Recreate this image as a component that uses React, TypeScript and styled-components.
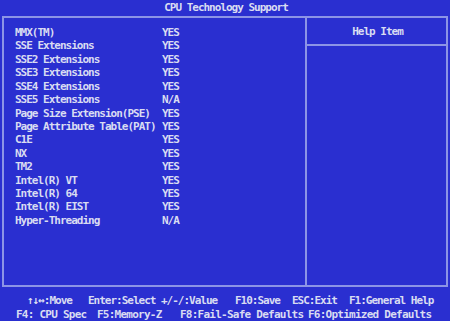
import React from "react";
import styled, { createGlobalStyle } from "styled-components";

const BLUE = "#2a2fd0";
const TEXT = "#d9dcf2";
const LINE = "#8c94e6";

const Global = createGlobalStyle`
  html, body { margin: 0; padding: 0; background: ${BLUE}; }
  body { font-family: "DejaVu Sans Mono", "Liberation Mono", monospace; }
`;

const Screen = styled.div`
  width: 450px;
  height: 321px;
  background: ${BLUE};
  color: ${TEXT};
  font-family: "DejaVu Sans Mono", "Liberation Mono", monospace;
  font-weight: bold;
  font-size: 11px;
  letter-spacing: -1px;
  display: flex;
  flex-direction: column;
  overflow: hidden;
`;

const TitleBar = styled.div`
  height: 16px;
  line-height: 15px;
  text-align: center;
  padding-left: 2px;
`;

const Frame = styled.div`
  margin: 0 2px;
  height: 271px;
  box-sizing: border-box;
  border: 2px solid ${LINE};
  display: grid;
  grid-template-columns: 301px 2px 1fr;
`;

const Divider = styled.div`
  background: ${LINE};
`;

const ItemList = styled.div`
  padding: 8px 0 0 11px;
  display: flex;
  flex-direction: column;
`;

const Row = styled.div`
  height: 13.43px;
  line-height: 13.43px;
  display: grid;
  grid-template-columns: 147px 1fr;
  white-space: pre;
`;

const HelpPanel = styled.div`
  display: flex;
  flex-direction: column;
`;

const HelpHeader = styled.div`
  height: 26px;
  line-height: 27px;
  text-align: center;
  border-bottom: 2px solid ${LINE};
  padding-left: 2px;
`;

const Footer = styled.div`
  flex: 1;
  padding-top: 7px;
  display: flex;
  flex-direction: column;
`;

const FooterLine = styled.div<{ $cols: string; $pad: number; $ls: number }>`
  display: grid;
  grid-template-columns: ${(p) => p.$cols};
  padding-left: ${(p) => p.$pad}px;
  letter-spacing: ${(p) => p.$ls}px;
  height: 13.5px;
  line-height: 13.5px;
  white-space: pre;
`;

const items: [string, string][] = [
  ["MMX(TM)", "YES"],
  ["SSE Extensions", "YES"],
  ["SSE2 Extensions", "YES"],
  ["SSE3 Extensions", "YES"],
  ["SSE4 Extensions", "YES"],
  ["SSE5 Extensions", "N/A"],
  ["Page Size Extension(PSE)", "YES"],
  ["Page Attribute Table(PAT)", "YES"],
  ["C1E", "YES"],
  ["NX", "YES"],
  ["TM2", "YES"],
  ["Intel(R) VT", "YES"],
  ["Intel(R) 64", "YES"],
  ["Intel(R) EIST", "YES"],
  ["Hyper-Threading", "N/A"],
];

export default function App() {
  return (
    <>
      <Global />
      <Screen>
        <TitleBar>CPU Technology Support</TitleBar>
        <Frame>
          <ItemList>
            {items.map(([k, v]) => (
              <Row key={k}>
                <span>{k}</span>
                <span>{v}</span>
              </Row>
            ))}
          </ItemList>
          <Divider />
          <HelpPanel>
            <HelpHeader>Help Item</HelpHeader>
          </HelpPanel>
        </Frame>
        <Footer>
          <FooterLine $pad={27} $ls={-1} $cols="61px 73px 74px 57px 57px auto">
            <span>↑↓↔:Move</span>
            <span>Enter:Select</span>
            <span>+/-/:Value</span>
            <span>F10:Save</span>
            <span>ESC:Exit</span>
            <span>F1:General Help</span>
          </FooterLine>
          <FooterLine $pad={16} $ls={-0.75} $cols="81px 83px 128px auto">
            <span>F4: CPU Spec</span>
            <span>F5:Memory-Z</span>
            <span>F8:Fail-Safe Defaults</span>
            <span>F6:Optimized Defaults</span>
          </FooterLine>
        </Footer>
      </Screen>
    </>
  );
}
